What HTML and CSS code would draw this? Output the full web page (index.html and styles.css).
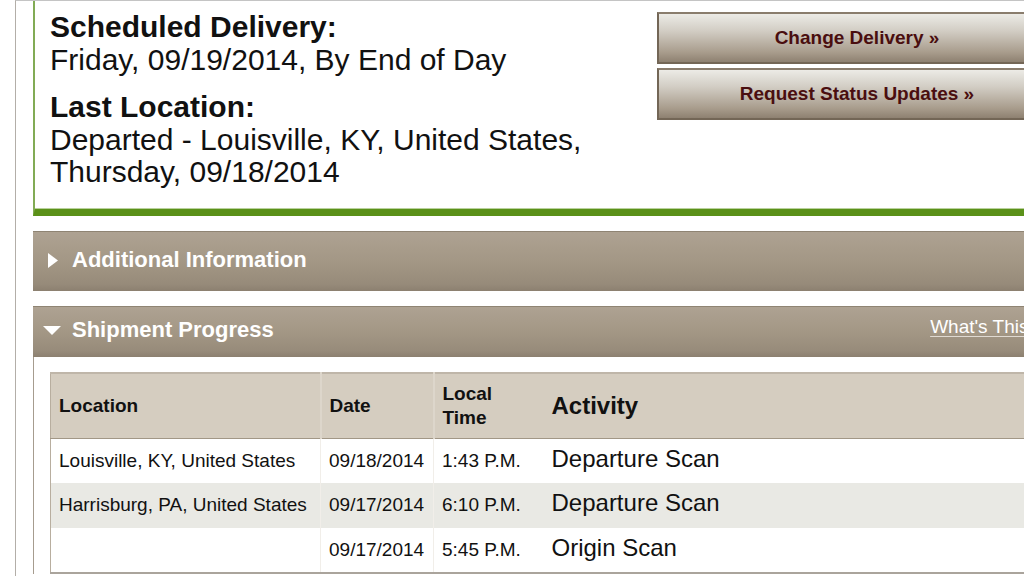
FILE: index.html
```html
<!DOCTYPE html>
<html>
<head>
<meta charset="utf-8">
<link rel="stylesheet" href="styles.css">
</head>
<body>
<div class="page">
  <section class="summary">
    <div class="summary-text">
      <h2 class="label">Scheduled Delivery:</h2>
      <p class="value">Friday, 09/19/2014, By End of Day</p>
      <h2 class="label label-second">Last Location:</h2>
      <p class="value">Departed - Louisville, KY, United States,<br>Thursday, 09/18/2014</p>
    </div>
    <div class="actions">
      <a class="btn" href="#">Change Delivery »</a>
      <a class="btn" href="#">Request Status Updates »</a>
    </div>
  </section>

  <div class="bar bar-collapsed">
    <svg class="tri-right" width="10" height="15" viewBox="0 0 10 15"><path d="M0 0 L10 7.5 L0 15 Z" fill="#fff"/></svg>
    <span class="bar-title">Additional Information</span>
  </div>

  <section class="panel">
    <div class="bar bar-open">
      <svg class="tri-down" width="18" height="9" viewBox="0 0 18 9"><path d="M0 0 L18 0 L9 9 Z" fill="#fff"/></svg>
      <span class="bar-title">Shipment Progress</span>
      <a class="whats" href="#">What's This?</a>
    </div>
    <div class="panel-body">
      <table class="progress">
        <colgroup>
          <col class="c-loc"><col class="c-date"><col class="c-time"><col>
        </colgroup>
        <thead>
          <tr>
            <th>Location</th>
            <th>Date</th>
            <th class="time">Local<br>Time</th>
            <th class="act-h">Activity</th>
          </tr>
        </thead>
        <tbody>
          <tr>
            <td>Louisville, KY, United States</td>
            <td>09/18/2014</td>
            <td class="time">1:43 P.M.</td>
            <td class="act">Departure Scan</td>
          </tr>
          <tr class="alt">
            <td>Harrisburg, PA, United States</td>
            <td>09/17/2014</td>
            <td class="time">6:10 P.M.</td>
            <td class="act">Departure Scan</td>
          </tr>
          <tr>
            <td></td>
            <td>09/17/2014</td>
            <td class="time">5:45 P.M.</td>
            <td class="act">Origin Scan</td>
          </tr>
        </tbody>
      </table>
    </div>
  </section>
</div>
</body>
</html>
```

FILE: styles.css
```css
html, body {
  margin: 0;
  padding: 0;
  background: #fff;
  overflow: hidden;
  width: 1024px;
  height: 576px;
}
body {
  font-family: "Liberation Sans", Arial, Helvetica, sans-serif;
  color: #111;
}
.page {
  margin-left: 15px;
  border-left: 1px solid #b3aea8;
  border-top: 1px solid #c4c4c4;
  padding-left: 17px;
  width: 1100px;
  height: 600px;
}
.summary {
  display: flex;
  border-left: 2px solid #82ab55;
  border-bottom: 7px solid #5b9119;
  box-shadow: inset 0 -1px 0 #b9d19c;
  height: 215px;
  box-sizing: border-box;
}
.summary-text {
  padding: 8px 0 0 15px;
  width: 607px;
}
.label {
  margin: 0;
  font-size: 30px;
  line-height: 35px;
  font-weight: bold;
}
.label-second {
  margin-top: 13px;
}
.value {
  margin: 0;
  font-size: 30px;
  line-height: 32px;
  font-weight: normal;
}
.actions {
  display: flex;
  flex-direction: column;
  gap: 4px;
  padding-top: 11px;
}
.btn {
  display: flex;
  align-items: center;
  justify-content: center;
  box-sizing: border-box;
  width: 400px;
  height: 52px;
  border: 2px solid #736656;
  border-top-color: #8a7d6d;
  background: linear-gradient(#ecebe6 0%, #d2cdc4 35%, #a89c8c 80%, #8e8171 100%);
  color: #4a0e0f;
  font-weight: bold;
  font-size: 19px;
  text-decoration: none;
}
.bar {
  display: flex;
  align-items: center;
  box-sizing: border-box;
  background: linear-gradient(#aea292 0%, #a39785 50%, #978b7a 88%, #8c8070 100%);
  border-top: 1px solid #8f8473;
  color: #fff;
}
.bar-collapsed {
  margin-top: 15px;
  height: 60px;
  padding-left: 15px;
}
.bar-open {
  height: 51px;
  padding-left: 10px;
  margin-top: 15px;
}
.tri-right {
  margin-right: 14px;
  margin-top: -2px;
}
.tri-down {
  margin-right: 11px;
  margin-top: -4px;
}
.bar-title {
  font-size: 22px;
  font-weight: bold;
  margin-top: -4px;
}
.whats {
  margin-left: auto;
  margin-right: 94px;
  align-self: flex-start;
  margin-top: 9px;
  color: #fff;
  font-size: 19px;
  text-decoration: underline;
  text-decoration-color: #e0dad2;
  text-underline-offset: 3px;
}
.panel-body {
  border-left: 1px solid #a69c8f;
  padding: 15px 0 0 16px;
}
.progress {
  border-collapse: collapse;
  width: 1060px;
  border-top: 2px solid #bfb6a9;
  border-left: 1px solid #b8ae9f;
  border-bottom: 2px solid #aaa49c;
}
.c-loc { width: 270px; }
.c-date { width: 113px; }
.c-time { width: 110px; }
.progress th {
  background: #d5cdc0;
  height: 65px;
  padding: 0 8px;
  text-align: left;
  vertical-align: middle;
  font-size: 19px;
  line-height: 24px;
  font-weight: bold;
  border-bottom: 1px solid #a29786;
  border-right: 2px solid #ddd6cb;
  box-sizing: border-box;
}
.progress th.act-h {
  font-size: 24px;
  border-right: none;
}
.progress td {
  height: 45px;
  padding: 6px 8px 0 8px;
  vertical-align: baseline;
  font-size: 19px;
  line-height: 24px;
  white-space: nowrap;
  border-right: 1px solid #f1eee9;
  box-sizing: border-box;
}
.progress th.time,
.progress td.time {
  border-right: none;
}
.progress td.act {
  font-size: 24px;
  line-height: 28px;
  border-right: none;
}
.progress tr.alt td {
  background: #e9e9e4;
}
```
